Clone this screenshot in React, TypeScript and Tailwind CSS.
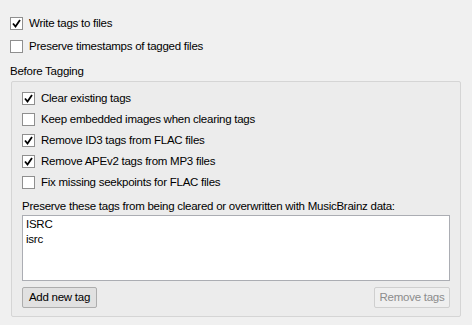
import React from 'react';

const font = { fontFamily: '"Liberation Sans", Arial, sans-serif', letterSpacing: '-0.25px' };

function Check({ checked }: { checked?: boolean }) {
  return (
    <span className="flex h-[13px] w-[13px] shrink-0 items-center justify-center border border-[#8f8f8f] bg-white">
      {checked && (
        <svg width="9" height="9" viewBox="0 0 9 9">
          <path d="M1 4.5 L3.5 7.5 L8 1" fill="none" stroke="#000" strokeWidth="1.8" />
        </svg>
      )}
    </span>
  );
}

function Option({ label, checked }: { label: string; checked?: boolean }) {
  return (
    <label className="flex h-[21px] items-center gap-[6px] text-[11.5px] text-black">
      <Check checked={checked} />
      <span>{label}</span>
    </label>
  );
}

export default function App() {
  return (
    <div className="h-[325px] w-[472px] bg-[#f0f0f0] pl-[10px] pr-[11px] pt-[13px]" style={font}>
      <div className="flex flex-col gap-[2px]">
        <Option label="Write tags to files" checked />
        <Option label="Preserve timestamps of tagged files" />
      </div>
      <div className="mt-[7px] text-[11.5px] leading-[15px] text-black">Before Tagging</div>
      <div className="ml-[1px] mt-[2px] h-[236px] rounded-[2px] border border-[#d5d5d5] bg-[#ececec] px-[10px] pt-[6px]">
        <Option label="Clear existing tags" checked />
        <Option label="Keep embedded images when clearing tags" />
        <Option label="Remove ID3 tags from FLAC files" checked />
        <Option label="Remove APEv2 tags from MP3 files" checked />
        <Option label="Fix missing seekpoints for FLAC files" />
        <div className="mt-[6px] text-[11.5px] leading-[15px] text-black">
          Preserve these tags from being cleared or overwritten with MusicBrainz data:
        </div>
        <div className="mt-[1px] h-[66px] border border-[#abadb3] bg-white px-[3px] pt-[1px] text-[11.5px] leading-[15px] text-black">
          <div>ISRC</div>
          <div>isrc</div>
        </div>
        <div className="mt-[6px] flex justify-between">
          <button className="h-[21px] w-[75px] rounded-[2px] border border-[#adadad] bg-[#e1e1e1] text-[11.5px] text-black">
            Add new tag
          </button>
          <button className="h-[21px] w-[76px] rounded-[2px] border border-[#cfcfcf] bg-[#efefef] text-[11.5px] text-[#8c8c8c]">
            Remove tags
          </button>
        </div>
      </div>
    </div>
  );
}
